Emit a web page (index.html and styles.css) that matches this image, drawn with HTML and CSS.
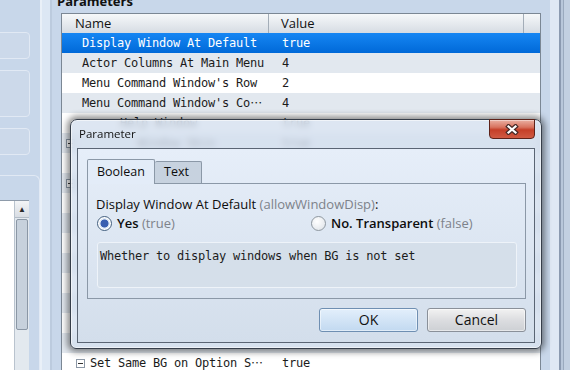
FILE: index.html
```html
<!DOCTYPE html>
<html>
<head>
    <title>Plugin Parameters</title>
    <link rel="stylesheet" href="styles.css">
</head>
<body>

    <div class="app">
        <div class="side">
            <div class="sbox short"></div>
            <div class="sbox tall"></div>
            <div class="sbox short last"></div>
            <div class="sgroup">
                <div class="slist">
                    <div class="sitems"></div>
                    <div class="sscroll">
                        <div class="sarrow">&#9650;</div>
                        <div class="sthumb"></div>
                    </div>
                </div>
            </div>
        </div>
        <div class="strip"></div>

        <div class="params">
            <h3>Parameters</h3>
            <div class="grid">
                <div class="grid-head">
                    <div class="head-name">Name</div>
                    <div class="head-value">Value</div>
                    <div class="head-rest"></div>
                </div>
                <div class="row selected"><div class="cell-name leaf">Display Window At Default</div><div class="cell-value">true</div></div>
                <div class="row alt"><div class="cell-name leaf">Actor Columns At Main Menu</div><div class="cell-value">4</div></div>
                <div class="row"><div class="cell-name leaf">Menu Command Window's Row</div><div class="cell-value">2</div></div>
                <div class="row alt"><div class="cell-name leaf"><span>Menu Command Window's Co</span><span class="ell">&#8943;</span></div><div class="cell-value">4</div></div>
                <div class="row"><div class="cell-name leaf2">Help Window</div><div class="cell-value">true</div></div>
                <div class="row alt"><div class="cell-name group0"><span class="toggle"></span><span class="far">Window Skin</span></div><div class="cell-value">true</div></div>
                <div class="row"><div class="cell-name leaf"></div><div class="cell-value"></div></div>
                <div class="row alt"><div class="cell-name group0"><span class="toggle"></span></div><div class="cell-value"></div></div>
                <div class="row"><div class="cell-name leaf"></div><div class="cell-value"></div></div>
                <div class="row alt"><div class="cell-name leaf"></div><div class="cell-value"></div></div>
                <div class="row"><div class="cell-name leaf"></div><div class="cell-value"></div></div>
                <div class="row alt"><div class="cell-name leaf"></div><div class="cell-value"></div></div>
                <div class="row"><div class="cell-name leaf"></div><div class="cell-value"></div></div>
                <div class="row alt"><div class="cell-name leaf"></div><div class="cell-value"></div></div>
                <div class="row"><div class="cell-name leaf"></div><div class="cell-value"></div></div>
                <div class="row alt"><div class="cell-name leaf"></div><div class="cell-value"></div></div>
                <div class="row"><div class="cell-name group1"><span class="toggle"></span><span>Set Same BG on Option S</span><span class="ell">&#8943;</span></div><div class="cell-value">true</div></div>
            </div>
        </div>
        <div class="edge"></div>
    </div>

    <div class="dialog">
        <div class="titlebar">
            <div class="title">Parameter</div>
            <div class="close">
                <svg width="14" height="11" viewBox="0 0 14 11">
                    <path d="M3.5 2.5 L10.5 8.5 M10.5 2.5 L3.5 8.5" stroke="#4a2b28" stroke-width="4.6" stroke-linecap="square"/>
                    <path d="M3.5 2.5 L10.5 8.5 M10.5 2.5 L3.5 8.5" stroke="#fff" stroke-width="2.2" stroke-linecap="square"/>
                </svg>
            </div>
        </div>
        <div class="client">
            <div class="tabs">
                <div class="tab active">Boolean</div>
                <div class="tab inactive">Text</div>
            </div>
            <div class="pane">
                <div class="prompt"><span>Display Window At Default&nbsp;</span><span class="hint">(allowWindowDisp)</span><span>:</span></div>
                <div class="choices">
                    <div class="choice"><span class="radio on"></span><span class="opt">Yes&nbsp;</span><span class="hint">(true)</span></div>
                    <div class="choice"><span class="radio"></span><span class="opt">No. Transparent&nbsp;</span><span class="hint">(false)</span></div>
                </div>
                <div class="desc">Whether to display windows when BG is not set</div>
            </div>
            <div class="buttons">
                <button class="btn default">OK</button>
                <button class="btn cancel">Cancel</button>
            </div>
        </div>
    </div>

</body>
</html>
```

FILE: styles.css
```css
body {
    margin: 0;
    background-color: #c8d7ea;
    font-family: "Open Sans", Arial, sans-serif;
    overflow: hidden;
}

.app {
    display: flex;
    height: 370px;
    overflow: hidden;
}

/* left column */
.side {
    width: 42px;
    box-sizing: border-box;
    border-right: 2px solid #e9f0f8;
    padding-top: 32px;
    display: flex;
    flex-direction: column;
}

.sbox {
    margin-left: -6px;
    width: 36px;
    box-sizing: border-box;
    border: 1px solid #e1e9f4;
    border-radius: 4px;
    background-color: #ccd9ea;
    flex: none;
}

.sbox.short {
    height: 27px;
    margin-bottom: 11px;
}

.sbox.tall {
    height: 47px;
    margin-bottom: 11px;
}

.sbox.last {
    margin-bottom: 20px;
}

.sgroup {
    flex: 1;
    margin-left: -6px;
    border-top: 1px solid #e1e9f4;
    border-right: 1px solid #e1e9f4;
    border-top-right-radius: 6px;
    padding-top: 24px;
    display: flex;
    flex-direction: column;
}

.slist {
    flex: 1;
    display: flex;
    margin-right: 10px;
    border-top: 1px solid #8e9baa;
}

.sitems {
    flex: 1;
    background-color: #fff;
}

.sscroll {
    width: 15px;
    box-sizing: border-box;
    background-color: #e3e9ef;
    border-left: 1px solid #b9c3ce;
}

.sarrow {
    height: 16px;
    font-size: 8px;
    line-height: 16px;
    text-align: center;
    color: #2a2a2a;
    background: linear-gradient(#f3f5f7, #d8dde3);
    border-bottom: 1px solid #b3bdc8;
}

.sthumb {
    margin: 1px 1px 0;
    height: 109px;
    border: 1px solid #8b97a5;
    border-radius: 2px;
    background-color: #c7d1dc;
}

.strip {
    width: 10px;
    box-sizing: border-box;
    background-color: #dce7f4;
    border-right: 2px solid #bccbde;
}

/* parameter list */
.params {
    width: 498px;
    box-sizing: border-box;
    padding: 0 9px;
}

.params h3 {
    margin: -6px 0 0 -4px;
    font-size: 13px;
    line-height: 14px;
    font-weight: bold;
    color: #111;
}

.grid {
    margin-top: 5px;
    height: 357px;
    overflow: hidden;
    border: 1px solid #7b8794;
    border-bottom: none;
    background-color: #fff;
}

.grid-head {
    display: flex;
    height: 19px;
    background: linear-gradient(#f6f8fa, #d6dce3);
    font-size: 13px;
    line-height: 19px;
    color: #111;
}

.head-name {
    width: 207px;
    box-sizing: border-box;
    border-right: 1px solid #a3adb8;
    padding-left: 13px;
}

.head-value {
    width: 255px;
    box-sizing: border-box;
    border-right: 1px solid #a3adb8;
    padding-left: 12px;
}

.head-rest {
    flex: 1;
}

.row {
    display: flex;
    height: 20px;
    font-family: "DejaVu Sans Mono", "Liberation Mono", monospace;
    font-size: 12px;
    letter-spacing: -0.22px;
    line-height: 20px;
    color: #1b1b1b;
    background-color: #fff;
    white-space: nowrap;
}

.row.alt {
    background-color: #e2e8ef;
}

.row.selected {
    background: linear-gradient(#1686f3, #0069d8);
    color: #fff;
}

.cell-name {
    width: 207px;
    box-sizing: border-box;
    display: flex;
    align-items: center;
    overflow: hidden;
}

.cell-value {
    padding-left: 13px;
}

.leaf {
    padding-left: 20px;
}

.leaf2 {
    padding-left: 58px;
}

.group0 {
    padding-left: 4px;
}

.group1 {
    padding-left: 14px;
}

.far {
    margin-left: 60px;
}

.toggle {
    width: 9px;
    height: 9px;
    flex: none;
    box-sizing: border-box;
    border: 1px solid #8c98a6;
    background-color: #fff;
    margin-right: 5px;
    display: flex;
    align-items: center;
    justify-content: center;
}

.group0 .toggle {
    margin-right: 3px;
}

.toggle::before {
    content: "";
    width: 5px;
    height: 1px;
    background-color: #333;
}

.ell {
    font-family: "Noto Sans CJK JP", sans-serif;
    letter-spacing: 0;
    line-height: 20px;
}

.edge {
    width: 20px;
    flex: none;
    background: linear-gradient(to right, #dfe8f4 0 9px, #8b9ab0 9px 11px, #b8c7da 11px 13px, #9aaabe 13px 14px, #c2d0e1 14px);
}

/* parameter dialog */
.dialog {
    position: absolute;
    left: 70px;
    top: 119px;
    width: 472px;
    height: 230px;
    box-sizing: border-box;
    border: 1px solid #363e4a;
    border-radius: 7px 7px 6px 6px;
    padding: 0 6px 5px;
    background-color: rgba(212, 224, 239, 0.8);
    backdrop-filter: blur(3px);
    box-shadow: 0 0 6px 3px rgba(0, 0, 0, 0.45), inset 0 0 0 1px rgba(255, 255, 255, 0.55);
    display: flex;
    flex-direction: column;
}

.titlebar {
    height: 28px;
    flex: none;
    display: flex;
    justify-content: space-between;
    align-items: flex-start;
}

.title {
    padding: 6px 0 0 2px;
    font-size: 11.5px;
    line-height: 16px;
    color: #111;
}

.close {
    width: 46px;
    height: 20px;
    margin-top: -1px;
    box-sizing: border-box;
    border: 1px solid #5e2219;
    border-radius: 0 0 4px 4px;
    background: linear-gradient(#eab0a3, #d8735f 40%, #c53f28 55%, #d05a43);
    box-shadow: inset 0 1px 0 rgba(255, 255, 255, 0.4);
    display: flex;
    align-items: center;
    justify-content: center;
}

.client {
    flex: 1;
    border: 1px solid #5a6574;
    background: linear-gradient(#e6eef9, #d3deeb);
    padding: 10px 8px 10px 9px;
    display: flex;
    flex-direction: column;
}

.tabs {
    display: flex;
    height: 24px;
    flex: none;
}

.tab {
    box-sizing: border-box;
    border: 1px solid #8b98a7;
    border-bottom: none;
    border-radius: 2px 2px 0 0;
    font-size: 12.5px;
    line-height: 16px;
    color: #0d0d0d;
}

.tab.active {
    width: 68px;
    height: 25px;
    padding: 4px 0 0 9px;
    background-color: #e3ecf8;
    position: relative;
    z-index: 1;
}

.tab.inactive {
    width: 47px;
    height: 22px;
    margin-top: 2px;
    border-left: none;
    padding: 2px 0 0 9px;
    background-color: #c7d2df;
}

.pane {
    flex: none;
    border: 1px solid #8b98a7;
    padding: 12px 8px 10px 8px;
}

.prompt {
    display: flex;
    font-size: 13px;
    line-height: 16px;
    color: #0d0d0d;
    white-space: nowrap;
}

.hint {
    color: #7d828a;
}

.choices {
    display: grid;
    grid-template-columns: 214px auto;
    margin: 3px 0 0 1px;
    font-size: 13px;
    line-height: 16px;
    color: #0d0d0d;
}

.choice {
    display: flex;
    align-items: center;
    white-space: nowrap;
}

.opt {
    font-weight: 600;
}

.radio {
    width: 15px;
    height: 15px;
    margin-right: 5px;
    box-sizing: border-box;
    border-radius: 50%;
    border: 1px solid #8e979f;
    background: radial-gradient(circle at 40% 35%, #fff, #dce1e7);
}

.radio.on {
    border: 1.5px solid #44607f;
    background: radial-gradient(circle, #3a5fb0 0 3.6px, #dfe9f6 4.4px 5px, #fff 5.6px);
}

.desc {
    margin: 11px 0 0 1px;
    height: 46px;
    box-sizing: border-box;
    border: 1px solid #eef3f9;
    border-radius: 3px;
    background-color: #d5dfea;
    padding: 5px 2px;
    font-family: "DejaVu Sans Mono", "Liberation Mono", monospace;
    font-size: 12px;
    letter-spacing: -0.22px;
    line-height: 16px;
    color: #1c1c1c;
}

.buttons {
    display: flex;
    justify-content: flex-end;
    gap: 9px;
    margin-top: 9px;
}

.btn {
    width: 99px;
    height: 24px;
    box-sizing: border-box;
    border: 1px solid #8a9099;
    border-radius: 3px;
    padding: 0;
    font-family: "Open Sans", Arial, sans-serif;
    font-size: 14px;
    line-height: 22px;
    text-align: center;
    color: #111;
    box-shadow: inset 0 0 0 1px rgba(255, 255, 255, 0.5);
}

.btn.default {
    border-color: #6f8fb2;
    background: linear-gradient(#e3effb, #c2d9f0);
}

.btn.cancel {
    background: linear-gradient(#f2f2f2, #dcdde0 50%, #cdd0d4);
}
```
